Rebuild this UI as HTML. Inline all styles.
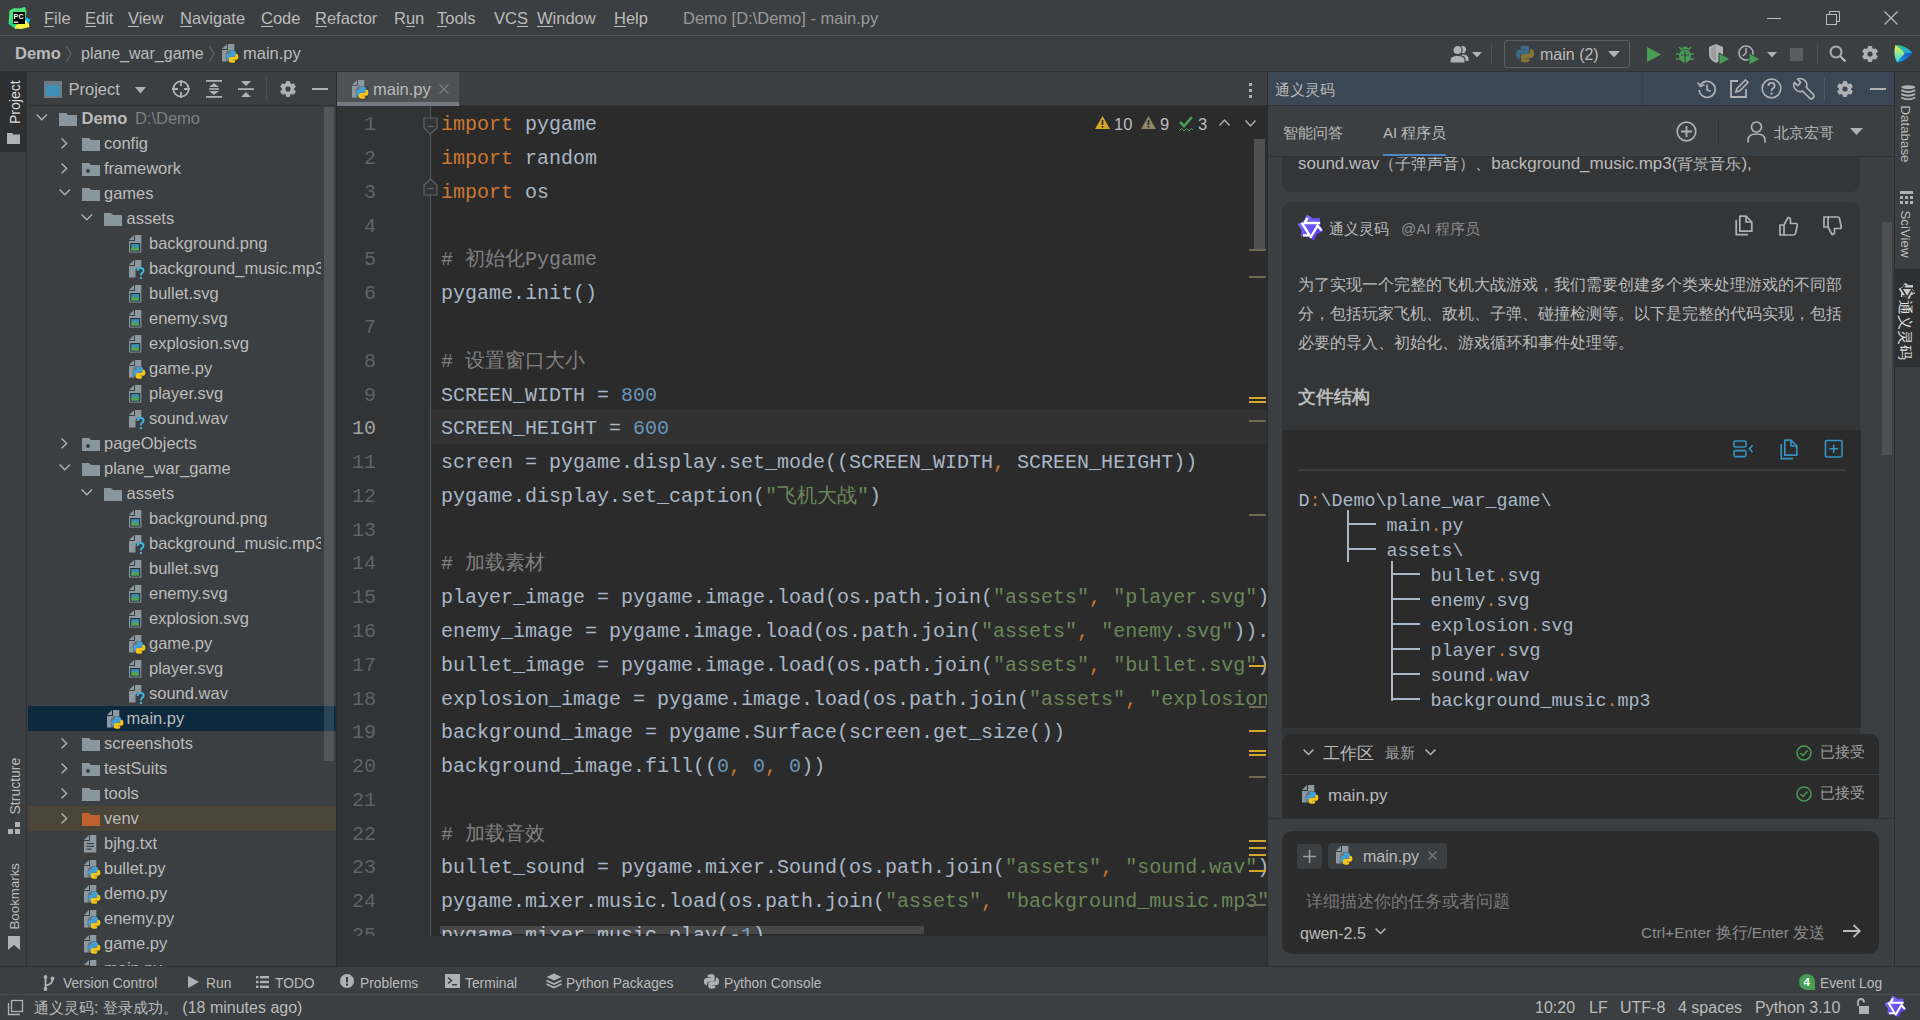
<!DOCTYPE html>
<html><head><meta charset="utf-8">
<style>
*{box-sizing:border-box;margin:0;padding:0}
html,body{width:1920px;height:1020px;overflow:hidden;background:#3c3f41;font-family:"Liberation Sans",sans-serif;color:#bbbbbb;font-size:16px}
.a{position:absolute}
.t{position:absolute;white-space:nowrap}
svg{position:absolute;overflow:visible}
</style></head><body>
<svg width="0" height="0" style="left:0;top:0">
<defs>
<g id="pylogo">
 <path d="M5.9 0C3 0 3.2 1.3 3.2 1.3V2.6H6V3H2.1S0 2.8 0 6C0 9.1 1.8 9 1.8 9H3V7.5S2.9 5.7 4.8 5.7H7.8S9.5 5.7 9.5 4V1.6S9.8 0 5.9 0Z" fill="#40a0d8"/>
 <path d="M6.1 12C9 12 8.8 10.7 8.8 10.7V9.4H6V9H9.9S12 9.2 12 6C12 2.9 10.2 3 10.2 3H9V4.5S9.1 6.3 7.2 6.3H4.2S2.5 6.3 2.5 8V10.4S2.2 12 6.1 12Z" fill="#f5c518"/>
</g>
<g id="pyfile">
 <path d="M0 5 L5 0 V5 Z" fill="#8d99a1"/>
 <path d="M6 0 H12.3 V17.6 H0 V6 H6 Z" fill="#8d99a1"/>
 <rect x="3.6" y="6" width="13.6" height="13.6" rx="5" fill="#2b2b2b" opacity=".35"/>
 <use href="#pylogo" x="4.4" y="6.8"/>
</g>
<g id="imgfile">
 <path d="M0 5 L5 0 V5 Z" fill="#8d99a1"/>
 <path d="M6 0 H12.3 V17.6 H0 V6 H6 Z" fill="#8d99a1"/>
 <rect x="1.2" y="8" width="10" height="8.6" fill="#263034"/>
 <rect x="2.3" y="9.1" width="7.8" height="6.4" fill="#3a8db3"/>
 <path d="M2.3 15.5 V13 Q4.5 11 6.8 12.6 Q9 12.6 10.1 14.2 V15.5 Z" fill="#55a648"/>
</g>
<g id="unkfile">
 <path d="M0 5 L5 0 V5 Z" fill="#8d99a1"/>
 <path d="M6 0 H12.3 V7 Q8 7 6.5 10 V17.6 H0 V6 H6 Z" fill="#8d99a1"/>
 <path d="M8.6 11 Q8.6 8 11.6 8 Q14.6 8 14.6 10.6 Q14.6 12.2 12.8 13.2 Q11.9 13.8 11.9 15.6" fill="none" stroke="#40b6e0" stroke-width="1.9"/>
 <rect x="10.9" y="17" width="2" height="2" fill="#40b6e0"/>
</g>
<g id="txtfile">
 <path d="M0 5 L5 0 V5 Z" fill="#8d99a1"/>
 <path d="M6 0 H12.3 V17.6 H0 V6 H6 Z" fill="#8d99a1"/>
 <rect x="2.5" y="8" width="7.5" height="1.2" fill="#3c3f41"/>
 <rect x="2.5" y="10.8" width="7.5" height="1.2" fill="#3c3f41"/>
 <rect x="2.5" y="13.6" width="5" height="1.2" fill="#3c3f41"/>
</g>
<g id="folder">
 <path d="M0 2 H7 L9 4 H18 V15 H0 Z" fill="#8a969d"/>
</g>
<g id="folderdot">
 <path d="M0 2 H7 L9 4 H18 V15 H0 Z" fill="#8a969d"/>
 <circle cx="6" cy="10" r="2" fill="#3c3f41"/>
</g>
<g id="folderorange">
 <path d="M0 2 H7 L9 4 H18 V15 H0 Z" fill="#c0602f"/>
</g>
<g id="chevR"><path d="M1 1 L6 6 L1 11" fill="none" stroke="#afb1b3" stroke-width="1.3"/></g>
<g id="chevD"><path d="M1 1 L6.5 6.5 L12 1" fill="none" stroke="#afb1b3" stroke-width="1.3"/></g>
</defs></svg>

<div class="a" style="left:0px;top:0px;width:1920px;height:35px;background:#3c3f41;"></div>
<div class="a" style="left:0px;top:35px;width:1920px;height:1px;background:#515658;"></div>
<svg style="left:8px;top:7px;" width="22" height="22" viewBox="0 0 22 22"><path d="M1.5 3.5 L6 1.2 L11 1.5 L17 0 L18.5 5 L17 18 L7.5 22 L0.5 17 Z" fill="#21d789"/><path d="M1.5 3.5 L6 1.2 L11 1.5 L17 0 L18.5 5 L9 6 L4 14 L0.8 16Z" fill="#6fe36a" opacity=".6"/><path d="M7.5 18.5 L20 12 L21.5 20 L13 22 L7 21.5Z" fill="#f5f53f"/><path d="M16.5 9.5 L22.5 12.5 L20 17Z" fill="#07c3f2"/><rect x="5" y="5" width="12" height="12" fill="#000"/><text x="5.6" y="11.6" font-size="7.2" font-weight="bold" fill="#fff" font-family="Liberation Sans">PC</text><rect x="5.8" y="14.5" width="4.5" height="1.3" fill="#fff"/></svg>
<div class="t " style="left:44px;top:8.28px;font-size:16.5px;line-height:21px;color:#bbbbbb;">File</div>
<div class="t " style="left:85px;top:8.28px;font-size:16.5px;line-height:21px;color:#bbbbbb;">Edit</div>
<div class="t " style="left:128px;top:8.28px;font-size:16.5px;line-height:21px;color:#bbbbbb;">View</div>
<div class="t " style="left:180px;top:8.28px;font-size:16.5px;line-height:21px;color:#bbbbbb;">Navigate</div>
<div class="t " style="left:261px;top:8.28px;font-size:16.5px;line-height:21px;color:#bbbbbb;">Code</div>
<div class="t " style="left:315px;top:8.28px;font-size:16.5px;line-height:21px;color:#bbbbbb;">Refactor</div>
<div class="t " style="left:394px;top:8.28px;font-size:16.5px;line-height:21px;color:#bbbbbb;">Run</div>
<div class="t " style="left:437px;top:8.28px;font-size:16.5px;line-height:21px;color:#bbbbbb;">Tools</div>
<div class="t " style="left:494px;top:8.28px;font-size:16.5px;line-height:21px;color:#bbbbbb;">VCS</div>
<div class="t " style="left:537px;top:8.28px;font-size:16.5px;line-height:21px;color:#bbbbbb;">Window</div>
<div class="t " style="left:614px;top:8.28px;font-size:16.5px;line-height:21px;color:#bbbbbb;">Help</div>
<div class="a" style="left:44px;top:26px;width:10px;height:1px;background:#bbbbbb;"></div>
<div class="a" style="left:85px;top:26px;width:11px;height:1px;background:#bbbbbb;"></div>
<div class="a" style="left:128px;top:26px;width:11px;height:1px;background:#bbbbbb;"></div>
<div class="a" style="left:180px;top:26px;width:12px;height:1px;background:#bbbbbb;"></div>
<div class="a" style="left:261px;top:26px;width:12px;height:1px;background:#bbbbbb;"></div>
<div class="a" style="left:315px;top:26px;width:12px;height:1px;background:#bbbbbb;"></div>
<div class="a" style="left:406px;top:26px;width:9px;height:1px;background:#bbbbbb;"></div>
<div class="a" style="left:437px;top:26px;width:10px;height:1px;background:#bbbbbb;"></div>
<div class="a" style="left:517px;top:26px;width:11px;height:1px;background:#bbbbbb;"></div>
<div class="a" style="left:537px;top:26px;width:16px;height:1px;background:#bbbbbb;"></div>
<div class="a" style="left:614px;top:26px;width:12px;height:1px;background:#bbbbbb;"></div>
<div class="t " style="left:683px;top:8.28px;font-size:16.5px;line-height:21px;color:#9a9a9a;">Demo [D:\Demo] - main.py</div>
<div class="a" style="left:1767px;top:18px;width:14px;height:1px;background:#bbbbbb;"></div>
<svg style="left:1826px;top:11px;" width="14" height="14" viewBox="0 0 14 14"><rect x="0.5" y="3.5" width="10" height="10" fill="none" stroke="#bbb"/><path d="M3.5 3.5 V0.5 H13.5 V10.5 H10.5" fill="none" stroke="#bbb"/></svg>
<svg style="left:1884px;top:11px;" width="14" height="14" viewBox="0 0 14 14"><path d="M0.5 0.5 L13.5 13.5 M13.5 0.5 L0.5 13.5" stroke="#bbb" stroke-width="1.2"/></svg>
<div class="a" style="left:0px;top:36px;width:1920px;height:35px;background:#3c3f41;"></div>
<div class="a" style="left:0px;top:71px;width:1920px;height:1px;background:#323232;"></div>
<div class="t " style="left:15px;top:43.28px;font-size:16.5px;line-height:21px;color:#bbbbbb;font-weight:bold;">Demo</div>
<svg style="left:66px;top:46px;" width="6" height="16" viewBox="0 0 6 16"><path d="M0.5 0.5 L5 8 L0.5 15.5" fill="none" stroke="#6e7072" stroke-width="1"/></svg>
<div class="t " style="left:81px;top:43.46px;font-size:16px;line-height:21px;color:#bbbbbb;">plane_war_game</div>
<svg style="left:209px;top:46px;" width="6" height="16" viewBox="0 0 6 16"><path d="M0.5 0.5 L5 8 L0.5 15.5" fill="none" stroke="#6e7072" stroke-width="1"/></svg>
<svg style="left:222px;top:44px;" width="17" height="20" viewBox="0 0 17 20"><use href="#pyfile"/></svg>
<div class="t " style="left:243px;top:43.28px;font-size:16.5px;line-height:21px;color:#bbbbbb;">main.py</div>
<svg style="left:1450px;top:45px;" width="20" height="18" viewBox="0 0 20 18"><circle cx="12.5" cy="4.6" r="3.6" fill="#afb1b3"/><path d="M9 16 Q9 9.5 13 9.5 Q18.5 9.5 18.5 14 V16Z" fill="#afb1b3"/><circle cx="7.5" cy="5" r="4.6" fill="#afb1b3" stroke="#3c3f41" stroke-width="1.2"/><path d="M0 18 V15 Q0 10.5 7.5 10.5 Q15 10.5 15 15 V18Z" fill="#afb1b3" stroke="#3c3f41" stroke-width="1.2"/></svg>
<svg style="left:1472px;top:52px;" width="10" height="6" viewBox="0 0 10 6"><path d="M0 0 H10 L5 5.5 Z" fill="#afb1b3"/></svg>
<div class="a" style="left:1491px;top:43px;width:1px;height:22px;background:#4c5052;"></div>
<div class="a" style="left:1504px;top:40px;width:126px;height:28px;background:transparent;border:1px solid #5e6060;border-radius:3px"></div>
<svg style="left:1516px;top:45px;" width="18" height="18" viewBox="0 0 18 18"><path d="M8.8 0.5c-4.5 0-4.2 2-4.2 2v2h4.3v.6H2.8S0 4.8 0 9.3s2.5 4.4 2.5 4.4H4v-2.1s-.1-2.5 2.5-2.5h4.2s2.4 0 2.4-2.4V2.9S13.5.5 8.8.5z" fill="#3b6987"/><path d="M9.2 17.5c4.5 0 4.2-2 4.2-2v-2H9.1v-.6h6.1s2.8.3 2.8-4.2-2.5-4.4-2.5-4.4H14v2.1s.1 2.5-2.5 2.5H7.3s-2.4 0-2.4 2.4v3.8S4.5 17.5 9.2 17.5z" fill="#857236"/></svg>
<div class="t " style="left:1540px;top:43.96px;font-size:16px;line-height:21px;color:#bbbbbb;">main (2)</div>
<svg style="left:1608px;top:51px;" width="12" height="7" viewBox="0 0 12 7"><path d="M0 0 H12 L6 6.5 Z" fill="#afb1b3"/></svg>
<svg style="left:1647px;top:47px;" width="14" height="15" viewBox="0 0 14 15"><path d="M0 0 L14 7.5 L0 15 Z" fill="#499c54"/></svg>
<svg style="left:1676px;top:45px;" width="18" height="18" viewBox="0 0 18 18"><ellipse cx="9" cy="11" rx="6" ry="6.5" fill="#499c54"/><path d="M5 4 Q9 -1 13 4 Z" fill="#499c54"/><path d="M3 2 L6 5 M15 2 L12 5 M0 9 H4 M14 9 H18 M0 14 H4 M14 14 H18" stroke="#499c54" stroke-width="1.6"/><path d="M9 6 V17 M5 10 H13" stroke="#3c3f41" stroke-width="1.1"/></svg>
<svg style="left:1708px;top:44px;" width="24" height="22" viewBox="0 0 24 22"><path d="M1 3 L8 0 L15 3 V10 Q15 16 8 19 Q1 16 1 10 Z" fill="#afb1b3"/><path d="M8 2 V17 Q3 15 3 10 V4 Z" fill="#9a9c9e"/><path d="M11 9 L22 15 L11 21 Z" fill="#499c54" stroke="#3c3f41" stroke-width="1"/></svg>
<svg style="left:1738px;top:44px;" width="26" height="22" viewBox="0 0 26 22"><circle cx="8" cy="9" r="7" fill="none" stroke="#afb1b3" stroke-width="1.6"/><path d="M8 4 V9 L5 12" fill="none" stroke="#afb1b3" stroke-width="1.5"/><path d="M11 9 L22 15 L11 21 Z" fill="#499c54" stroke="#3c3f41" stroke-width="1"/></svg>
<svg style="left:1767px;top:52px;" width="10" height="6" viewBox="0 0 10 6"><path d="M0 0 H10 L5 5.5 Z" fill="#afb1b3"/></svg>
<div class="a" style="left:1790px;top:48px;width:13px;height:13px;background:#5a5d5f;"></div>
<div class="a" style="left:1817px;top:43px;width:1px;height:22px;background:#4c5052;"></div>
<svg style="left:1829px;top:45px;" width="18" height="18" viewBox="0 0 18 18"><circle cx="7" cy="7" r="5.5" fill="none" stroke="#afb1b3" stroke-width="2"/><path d="M11 11 L16.5 16.5" stroke="#afb1b3" stroke-width="2.4"/></svg>
<svg style="left:1862px;top:46px;" width="17" height="17" viewBox="0 0 17 17"><g transform="translate(8 8)"><circle r="6.2" fill="#afb1b3"/><rect x="-2.2" y="-8" width="4.4" height="16" rx="1" fill="#afb1b3" transform="rotate(0)"/><rect x="-2.2" y="-8" width="4.4" height="16" rx="1" fill="#afb1b3" transform="rotate(60)"/><rect x="-2.2" y="-8" width="4.4" height="16" rx="1" fill="#afb1b3" transform="rotate(120)"/><circle r="2.6" fill="#3c3f41"/></g></svg>
<svg style="left:1894px;top:44px;" width="20" height="20" viewBox="0 0 20 20"><defs><linearGradient id="tbl" x1="0" y1="0" x2="0" y2="1"><stop offset="0" stop-color="#f2f250"/><stop offset="1" stop-color="#28d4e0"/></linearGradient><linearGradient id="tbt" x1="0" y1="0" x2="1" y2="1"><stop offset="0" stop-color="#22d882"/><stop offset="1" stop-color="#1e9af0"/></linearGradient><linearGradient id="tbb" x1="1" y1="0" x2="0" y2="1"><stop offset="0" stop-color="#1c4fc0"/><stop offset="1" stop-color="#10a8f0"/></linearGradient></defs><path d="M1.5 1 Q-1.5 10 3 18.5 L11 9.2 Q7 4 1.5 1Z" fill="url(#tbl)"/><path d="M1.5 1 Q12 1 18.5 9.2 H11 Q7 4 1.5 1Z" fill="url(#tbt)"/><path d="M18.5 9.2 Q12 17 3 18.5 Q8 13 11 9.2Z" fill="url(#tbb)"/></svg>
<div class="a" style="left:0px;top:72px;width:28px;height:895px;background:#3c3f41;"></div>
<div class="a" style="left:26px;top:72px;width:1px;height:895px;background:#2f3133;"></div>
<div class="a" style="left:0px;top:72px;width:26px;height:80px;background:#2d2f31;"></div>
<div class="t " style="left:0px;top:-13.85px;font-size:14px;line-height:18px;color:#dddddd;transform-origin:0 0;transform:translate(6.2px,124px) rotate(-90deg);top:0;line-height:18px">Project</div>
<svg style="left:7px;top:133px;" width="13" height="11" viewBox="0 0 13 11"><path d="M0 0 H5 L6.5 1.5 H13 V11 H0Z" fill="#afb1b3"/></svg>
<div class="t " style="left:0px;top:-13.85px;font-size:14px;line-height:18px;color:#bbbbbb;transform-origin:0 0;transform:translate(6.2px,814.5px) rotate(-90deg);top:0;line-height:18px">Structure</div>
<svg style="left:8px;top:822px;" width="13" height="12" viewBox="0 0 13 12"><rect x="7" y="0" width="5" height="5" fill="#afb1b3"/><rect x="0" y="7" width="5" height="5" fill="#afb1b3"/><rect x="7" y="7" width="5" height="5" fill="#afb1b3"/></svg>
<div class="t " style="left:0px;top:-13.11px;font-size:13.3px;line-height:17px;color:#bbbbbb;transform-origin:0 0;transform:translate(6.4px,929.5px) rotate(-90deg);top:0;line-height:18px">Bookmarks</div>
<svg style="left:8px;top:936px;" width="12" height="14" viewBox="0 0 12 14"><path d="M0 0 H12 V14 L6 9 L0 14Z" fill="#afb1b3"/></svg>
<div class="a" style="left:28px;top:72px;width:308px;height:895px;background:#3c3f41;"></div>
<div class="a" style="left:28px;top:105px;width:308px;height:1px;background:#323232;"></div>
<svg style="left:44px;top:81px;" width="18" height="17" viewBox="0 0 18 17"><rect x="0" y="0" width="18" height="17" fill="#6f7b82"/><rect x="2" y="4" width="14" height="11" fill="#3e90b8"/></svg>
<div class="t " style="left:68.5px;top:78.78px;font-size:16.5px;line-height:21px;color:#bbbbbb;">Project</div>
<svg style="left:135px;top:87px;" width="11" height="7" viewBox="0 0 11 7"><path d="M0 0 H11 L5.5 6.5Z" fill="#afb1b3"/></svg>
<svg style="left:172px;top:80px;" width="18" height="18" viewBox="0 0 18 18"><circle cx="9" cy="9" r="7.6" fill="none" stroke="#afb1b3" stroke-width="1.8"/><path d="M9 0 V6 M9 12 V18 M0 9 H6 M12 9 H18" stroke="#afb1b3" stroke-width="1.8"/></svg>
<svg style="left:206px;top:80px;" width="16" height="18" viewBox="0 0 16 18"><rect x="0" y="0" width="16" height="1.8" fill="#afb1b3"/><rect x="0" y="16" width="16" height="1.8" fill="#afb1b3"/><path d="M3 7 L8 3 L13 7Z M3 11 L8 15 L13 11Z" fill="#afb1b3"/><rect x="3" y="8.2" width="10" height="1.6" fill="#afb1b3"/></svg>
<svg style="left:238px;top:80px;" width="16" height="18" viewBox="0 0 16 18"><rect x="0" y="8.2" width="16" height="1.8" fill="#afb1b3"/><path d="M3 1 L8 6 L13 1Z M3 17 L8 12 L13 17Z" fill="#afb1b3"/></svg>
<div class="a" style="left:266px;top:77px;width:1px;height:23px;background:#4c5052;"></div>
<svg style="left:280px;top:81px;" width="17" height="17" viewBox="0 0 17 17"><g transform="translate(8 8)"><circle r="6.2" fill="#afb1b3"/><rect x="-2.2" y="-8" width="4.4" height="16" rx="1" fill="#afb1b3" transform="rotate(0)"/><rect x="-2.2" y="-8" width="4.4" height="16" rx="1" fill="#afb1b3" transform="rotate(60)"/><rect x="-2.2" y="-8" width="4.4" height="16" rx="1" fill="#afb1b3" transform="rotate(120)"/><circle r="2.6" fill="#3c3f41"/></g></svg>
<div class="a" style="left:312px;top:88px;width:16px;height:2px;background:#afb1b3;"></div>
<div class="a" style="left:28px;top:706px;width:308px;height:25px;background:#0d293e;"></div>
<div class="a" style="left:28px;top:806px;width:308px;height:25px;background:#4a4538;"></div>
<div class="a" style="left:28px;top:106px;width:293px;height:861px;overflow:hidden">
<svg style="left:8.0px;top:8px;" width="12" height="8" viewBox="0 0 12 8"><path d="M0.6 0.6 L5.8 5.8 L11 0.6" fill="none" stroke="#afb1b3" stroke-width="1.4"/></svg>
<svg style="left:31.0px;top:5px;" width="18" height="15" viewBox="0 0 18 15"><use href="#folder"/></svg>
<div class="t" style="left:53.5px;top:2.200000000000001px;font-size:16.5px;line-height:21px;color:#bbbbbb"><b>Demo</b> <span style="color:#7e7e7e;margin-left:3px">D:\Demo</span></div>
<svg style="left:33.0px;top:32px;" width="8" height="11" viewBox="0 0 8 11"><path d="M0.6 0.6 L5.6 5.4 L0.6 10.2" fill="none" stroke="#afb1b3" stroke-width="1.4"/></svg>
<svg style="left:53.5px;top:30px;" width="18" height="15" viewBox="0 0 18 15"><use href="#folder"/></svg>
<div class="t " style="left:76.0px;top:27.28px;font-size:16.5px;line-height:21px;color:#bbbbbb;">config</div>
<svg style="left:33.0px;top:57px;" width="8" height="11" viewBox="0 0 8 11"><path d="M0.6 0.6 L5.6 5.4 L0.6 10.2" fill="none" stroke="#afb1b3" stroke-width="1.4"/></svg>
<svg style="left:53.5px;top:55px;" width="18" height="15" viewBox="0 0 18 15"><use href="#folderdot"/></svg>
<div class="t " style="left:76.0px;top:52.28px;font-size:16.5px;line-height:21px;color:#bbbbbb;">framework</div>
<svg style="left:30.5px;top:83px;" width="12" height="8" viewBox="0 0 12 8"><path d="M0.6 0.6 L5.8 5.8 L11 0.6" fill="none" stroke="#afb1b3" stroke-width="1.4"/></svg>
<svg style="left:53.5px;top:80px;" width="18" height="15" viewBox="0 0 18 15"><use href="#folder"/></svg>
<div class="t " style="left:76.0px;top:77.28px;font-size:16.5px;line-height:21px;color:#bbbbbb;">games</div>
<svg style="left:53.0px;top:108px;" width="12" height="8" viewBox="0 0 12 8"><path d="M0.6 0.6 L5.8 5.8 L11 0.6" fill="none" stroke="#afb1b3" stroke-width="1.4"/></svg>
<svg style="left:76.0px;top:105px;" width="18" height="15" viewBox="0 0 18 15"><use href="#folder"/></svg>
<div class="t " style="left:98.5px;top:102.28px;font-size:16.5px;line-height:21px;color:#bbbbbb;">assets</div>
<svg style="left:101.0px;top:129.2px;" width="17" height="20" viewBox="0 0 17 20"><use href="#imgfile"/></svg>
<div class="t " style="left:121.0px;top:127.28px;font-size:16.5px;line-height:21px;color:#bbbbbb;">background.png</div>
<svg style="left:101.0px;top:154.2px;" width="17" height="20" viewBox="0 0 17 20"><use href="#unkfile"/></svg>
<div class="t " style="left:121.0px;top:152.28px;font-size:16.5px;line-height:21px;color:#bbbbbb;">background_music.mp3</div>
<svg style="left:101.0px;top:179.2px;" width="17" height="20" viewBox="0 0 17 20"><use href="#imgfile"/></svg>
<div class="t " style="left:121.0px;top:177.28px;font-size:16.5px;line-height:21px;color:#bbbbbb;">bullet.svg</div>
<svg style="left:101.0px;top:204.2px;" width="17" height="20" viewBox="0 0 17 20"><use href="#imgfile"/></svg>
<div class="t " style="left:121.0px;top:202.28px;font-size:16.5px;line-height:21px;color:#bbbbbb;">enemy.svg</div>
<svg style="left:101.0px;top:229.2px;" width="17" height="20" viewBox="0 0 17 20"><use href="#imgfile"/></svg>
<div class="t " style="left:121.0px;top:227.28px;font-size:16.5px;line-height:21px;color:#bbbbbb;">explosion.svg</div>
<svg style="left:101.0px;top:254.2px;" width="17" height="20" viewBox="0 0 17 20"><use href="#pyfile"/></svg>
<div class="t " style="left:121.0px;top:252.28px;font-size:16.5px;line-height:21px;color:#bbbbbb;">game.py</div>
<svg style="left:101.0px;top:279.2px;" width="17" height="20" viewBox="0 0 17 20"><use href="#imgfile"/></svg>
<div class="t " style="left:121.0px;top:277.28px;font-size:16.5px;line-height:21px;color:#bbbbbb;">player.svg</div>
<svg style="left:101.0px;top:304.2px;" width="17" height="20" viewBox="0 0 17 20"><use href="#unkfile"/></svg>
<div class="t " style="left:121.0px;top:302.28px;font-size:16.5px;line-height:21px;color:#bbbbbb;">sound.wav</div>
<svg style="left:33.0px;top:332px;" width="8" height="11" viewBox="0 0 8 11"><path d="M0.6 0.6 L5.6 5.4 L0.6 10.2" fill="none" stroke="#afb1b3" stroke-width="1.4"/></svg>
<svg style="left:53.5px;top:330px;" width="18" height="15" viewBox="0 0 18 15"><use href="#folderdot"/></svg>
<div class="t " style="left:76.0px;top:327.28px;font-size:16.5px;line-height:21px;color:#bbbbbb;">pageObjects</div>
<svg style="left:30.5px;top:358px;" width="12" height="8" viewBox="0 0 12 8"><path d="M0.6 0.6 L5.8 5.8 L11 0.6" fill="none" stroke="#afb1b3" stroke-width="1.4"/></svg>
<svg style="left:53.5px;top:355px;" width="18" height="15" viewBox="0 0 18 15"><use href="#folder"/></svg>
<div class="t " style="left:76.0px;top:352.28px;font-size:16.5px;line-height:21px;color:#bbbbbb;">plane_war_game</div>
<svg style="left:53.0px;top:383px;" width="12" height="8" viewBox="0 0 12 8"><path d="M0.6 0.6 L5.8 5.8 L11 0.6" fill="none" stroke="#afb1b3" stroke-width="1.4"/></svg>
<svg style="left:76.0px;top:380px;" width="18" height="15" viewBox="0 0 18 15"><use href="#folder"/></svg>
<div class="t " style="left:98.5px;top:377.28px;font-size:16.5px;line-height:21px;color:#bbbbbb;">assets</div>
<svg style="left:101.0px;top:404.2px;" width="17" height="20" viewBox="0 0 17 20"><use href="#imgfile"/></svg>
<div class="t " style="left:121.0px;top:402.28px;font-size:16.5px;line-height:21px;color:#bbbbbb;">background.png</div>
<svg style="left:101.0px;top:429.2px;" width="17" height="20" viewBox="0 0 17 20"><use href="#unkfile"/></svg>
<div class="t " style="left:121.0px;top:427.28px;font-size:16.5px;line-height:21px;color:#bbbbbb;">background_music.mp3</div>
<svg style="left:101.0px;top:454.2px;" width="17" height="20" viewBox="0 0 17 20"><use href="#imgfile"/></svg>
<div class="t " style="left:121.0px;top:452.28px;font-size:16.5px;line-height:21px;color:#bbbbbb;">bullet.svg</div>
<svg style="left:101.0px;top:479.2px;" width="17" height="20" viewBox="0 0 17 20"><use href="#imgfile"/></svg>
<div class="t " style="left:121.0px;top:477.28px;font-size:16.5px;line-height:21px;color:#bbbbbb;">enemy.svg</div>
<svg style="left:101.0px;top:504.2px;" width="17" height="20" viewBox="0 0 17 20"><use href="#imgfile"/></svg>
<div class="t " style="left:121.0px;top:502.28px;font-size:16.5px;line-height:21px;color:#bbbbbb;">explosion.svg</div>
<svg style="left:101.0px;top:529.2px;" width="17" height="20" viewBox="0 0 17 20"><use href="#pyfile"/></svg>
<div class="t " style="left:121.0px;top:527.28px;font-size:16.5px;line-height:21px;color:#bbbbbb;">game.py</div>
<svg style="left:101.0px;top:554.2px;" width="17" height="20" viewBox="0 0 17 20"><use href="#imgfile"/></svg>
<div class="t " style="left:121.0px;top:552.28px;font-size:16.5px;line-height:21px;color:#bbbbbb;">player.svg</div>
<svg style="left:101.0px;top:579.2px;" width="17" height="20" viewBox="0 0 17 20"><use href="#unkfile"/></svg>
<div class="t " style="left:121.0px;top:577.28px;font-size:16.5px;line-height:21px;color:#bbbbbb;">sound.wav</div>
<svg style="left:78.5px;top:604.2px;" width="17" height="20" viewBox="0 0 17 20"><use href="#pyfile"/></svg>
<div class="t " style="left:98.5px;top:602.28px;font-size:16.5px;line-height:21px;color:#bbbbbb;">main.py</div>
<svg style="left:33.0px;top:632px;" width="8" height="11" viewBox="0 0 8 11"><path d="M0.6 0.6 L5.6 5.4 L0.6 10.2" fill="none" stroke="#afb1b3" stroke-width="1.4"/></svg>
<svg style="left:53.5px;top:630px;" width="18" height="15" viewBox="0 0 18 15"><use href="#folder"/></svg>
<div class="t " style="left:76.0px;top:627.28px;font-size:16.5px;line-height:21px;color:#bbbbbb;">screenshots</div>
<svg style="left:33.0px;top:657px;" width="8" height="11" viewBox="0 0 8 11"><path d="M0.6 0.6 L5.6 5.4 L0.6 10.2" fill="none" stroke="#afb1b3" stroke-width="1.4"/></svg>
<svg style="left:53.5px;top:655px;" width="18" height="15" viewBox="0 0 18 15"><use href="#folderdot"/></svg>
<div class="t " style="left:76.0px;top:652.28px;font-size:16.5px;line-height:21px;color:#bbbbbb;">testSuits</div>
<svg style="left:33.0px;top:682px;" width="8" height="11" viewBox="0 0 8 11"><path d="M0.6 0.6 L5.6 5.4 L0.6 10.2" fill="none" stroke="#afb1b3" stroke-width="1.4"/></svg>
<svg style="left:53.5px;top:680px;" width="18" height="15" viewBox="0 0 18 15"><use href="#folder"/></svg>
<div class="t " style="left:76.0px;top:677.28px;font-size:16.5px;line-height:21px;color:#bbbbbb;">tools</div>
<svg style="left:33.0px;top:707px;" width="8" height="11" viewBox="0 0 8 11"><path d="M0.6 0.6 L5.6 5.4 L0.6 10.2" fill="none" stroke="#afb1b3" stroke-width="1.4"/></svg>
<svg style="left:53.5px;top:705px;" width="18" height="15" viewBox="0 0 18 15"><use href="#folderorange"/></svg>
<div class="t " style="left:76.0px;top:702.28px;font-size:16.5px;line-height:21px;color:#bbbbbb;">venv</div>
<svg style="left:56.0px;top:729.2px;" width="17" height="20" viewBox="0 0 17 20"><use href="#txtfile"/></svg>
<div class="t " style="left:76.0px;top:727.28px;font-size:16.5px;line-height:21px;color:#bbbbbb;">bjhg.txt</div>
<svg style="left:56.0px;top:754.2px;" width="17" height="20" viewBox="0 0 17 20"><use href="#pyfile"/></svg>
<div class="t " style="left:76.0px;top:752.28px;font-size:16.5px;line-height:21px;color:#bbbbbb;">bullet.py</div>
<svg style="left:56.0px;top:779.2px;" width="17" height="20" viewBox="0 0 17 20"><use href="#pyfile"/></svg>
<div class="t " style="left:76.0px;top:777.28px;font-size:16.5px;line-height:21px;color:#bbbbbb;">demo.py</div>
<svg style="left:56.0px;top:804.2px;" width="17" height="20" viewBox="0 0 17 20"><use href="#pyfile"/></svg>
<div class="t " style="left:76.0px;top:802.28px;font-size:16.5px;line-height:21px;color:#bbbbbb;">enemy.py</div>
<svg style="left:56.0px;top:829.2px;" width="17" height="20" viewBox="0 0 17 20"><use href="#pyfile"/></svg>
<div class="t " style="left:76.0px;top:827.28px;font-size:16.5px;line-height:21px;color:#bbbbbb;">game.py</div>
<svg style="left:56.0px;top:854.2px;" width="17" height="20" viewBox="0 0 17 20"><use href="#pyfile"/></svg>
<div class="t " style="left:76.0px;top:852.28px;font-size:16.5px;line-height:21px;color:#bbbbbb;">main.py</div>
</div>
<div class="a" style="left:324px;top:107px;width:10px;height:654px;background:rgba(255,255,255,0.12);"></div>
<div class="a" style="left:336px;top:72px;width:1px;height:895px;background:#2b2b2b;"></div>
<div class="a" style="left:337px;top:72px;width:931px;height:34px;background:#3c3f41;"></div>
<div class="a" style="left:337px;top:105px;width:931px;height:1px;background:#323232;"></div>
<div class="a" style="left:337px;top:72px;width:122px;height:34px;background:#4e5254;"></div>
<div class="a" style="left:337px;top:102px;width:122px;height:4px;background:#747a80;"></div>
<svg style="left:352px;top:80px;" width="17" height="20" viewBox="0 0 17 20"><use href="#pyfile"/></svg>
<div class="t " style="left:373px;top:79.28px;font-size:16.5px;line-height:21px;color:#bbbbbb;">main.py</div>
<svg style="left:439px;top:84px;" width="10" height="10" viewBox="0 0 10 10"><path d="M0.5 0.5 L9.5 9.5 M9.5 0.5 L0.5 9.5" stroke="#7b7e80" stroke-width="1.2"/></svg>
<div class="a" style="left:1249px;top:83px;width:3px;height:3px;background:#afb1b3;"></div>
<div class="a" style="left:1249px;top:89px;width:3px;height:3px;background:#afb1b3;"></div>
<div class="a" style="left:1249px;top:95px;width:3px;height:3px;background:#afb1b3;"></div>
<div class="a" style="left:337px;top:106px;width:931px;height:861px;background:#2b2b2b;"></div>
<div class="a" style="left:337px;top:106px;width:94px;height:830px;background:#313335;"></div>
<div class="a" style="left:431px;top:410px;width:836px;height:34px;background:#323232;"></div>
<div class="a" style="left:336px;top:106px;width:931px;height:830px;overflow:hidden">
<div class="t" style="left:0;width:40px;text-align:right;top:2.28px;font-family:'Liberation Mono',monospace;font-size:20px;line-height:34px;color:#606366">1</div>
<div class="t" style="left:105px;top:2.28px;font-family:'Liberation Mono',monospace;font-size:20px;line-height:34px;color:#a9b7c6"><span style="color:#cc7832">import</span> pygame</div>
<div class="t" style="left:0;width:40px;text-align:right;top:36.06px;font-family:'Liberation Mono',monospace;font-size:20px;line-height:34px;color:#606366">2</div>
<div class="t" style="left:105px;top:36.06px;font-family:'Liberation Mono',monospace;font-size:20px;line-height:34px;color:#a9b7c6"><span style="color:#cc7832">import</span> random</div>
<div class="t" style="left:0;width:40px;text-align:right;top:69.84px;font-family:'Liberation Mono',monospace;font-size:20px;line-height:34px;color:#606366">3</div>
<div class="t" style="left:105px;top:69.84px;font-family:'Liberation Mono',monospace;font-size:20px;line-height:34px;color:#a9b7c6"><span style="color:#cc7832">import</span> os</div>
<div class="t" style="left:0;width:40px;text-align:right;top:103.62px;font-family:'Liberation Mono',monospace;font-size:20px;line-height:34px;color:#606366">4</div>
<div class="t" style="left:0;width:40px;text-align:right;top:137.40px;font-family:'Liberation Mono',monospace;font-size:20px;line-height:34px;color:#606366">5</div>
<div class="t" style="left:105px;top:137.40px;font-family:'Liberation Mono',monospace;font-size:20px;line-height:34px;color:#a9b7c6"><span style="color:#808080"># 初始化Pygame</span></div>
<div class="t" style="left:0;width:40px;text-align:right;top:171.18px;font-family:'Liberation Mono',monospace;font-size:20px;line-height:34px;color:#606366">6</div>
<div class="t" style="left:105px;top:171.18px;font-family:'Liberation Mono',monospace;font-size:20px;line-height:34px;color:#a9b7c6">pygame.init()</div>
<div class="t" style="left:0;width:40px;text-align:right;top:204.96px;font-family:'Liberation Mono',monospace;font-size:20px;line-height:34px;color:#606366">7</div>
<div class="t" style="left:0;width:40px;text-align:right;top:238.74px;font-family:'Liberation Mono',monospace;font-size:20px;line-height:34px;color:#606366">8</div>
<div class="t" style="left:105px;top:238.74px;font-family:'Liberation Mono',monospace;font-size:20px;line-height:34px;color:#a9b7c6"><span style="color:#808080"># 设置窗口大小</span></div>
<div class="t" style="left:0;width:40px;text-align:right;top:272.52px;font-family:'Liberation Mono',monospace;font-size:20px;line-height:34px;color:#606366">9</div>
<div class="t" style="left:105px;top:272.52px;font-family:'Liberation Mono',monospace;font-size:20px;line-height:34px;color:#a9b7c6">SCREEN_WIDTH = <span style="color:#6897bb">800</span></div>
<div class="t" style="left:0;width:40px;text-align:right;top:306.30px;font-family:'Liberation Mono',monospace;font-size:20px;line-height:34px;color:#a4a3a3">10</div>
<div class="t" style="left:105px;top:306.30px;font-family:'Liberation Mono',monospace;font-size:20px;line-height:34px;color:#a9b7c6">SCREEN_HEIGHT = <span style="color:#6897bb">600</span></div>
<div class="t" style="left:0;width:40px;text-align:right;top:340.08px;font-family:'Liberation Mono',monospace;font-size:20px;line-height:34px;color:#606366">11</div>
<div class="t" style="left:105px;top:340.08px;font-family:'Liberation Mono',monospace;font-size:20px;line-height:34px;color:#a9b7c6">screen = pygame.display.set_mode((SCREEN_WIDTH<span style="color:#cc7832">, </span>SCREEN_HEIGHT))</div>
<div class="t" style="left:0;width:40px;text-align:right;top:373.86px;font-family:'Liberation Mono',monospace;font-size:20px;line-height:34px;color:#606366">12</div>
<div class="t" style="left:105px;top:373.86px;font-family:'Liberation Mono',monospace;font-size:20px;line-height:34px;color:#a9b7c6">pygame.display.set_caption(<span style="color:#6a8759">&quot;飞机大战&quot;</span>)</div>
<div class="t" style="left:0;width:40px;text-align:right;top:407.64px;font-family:'Liberation Mono',monospace;font-size:20px;line-height:34px;color:#606366">13</div>
<div class="t" style="left:0;width:40px;text-align:right;top:441.42px;font-family:'Liberation Mono',monospace;font-size:20px;line-height:34px;color:#606366">14</div>
<div class="t" style="left:105px;top:441.42px;font-family:'Liberation Mono',monospace;font-size:20px;line-height:34px;color:#a9b7c6"><span style="color:#808080"># 加载素材</span></div>
<div class="t" style="left:0;width:40px;text-align:right;top:475.20px;font-family:'Liberation Mono',monospace;font-size:20px;line-height:34px;color:#606366">15</div>
<div class="t" style="left:105px;top:475.20px;font-family:'Liberation Mono',monospace;font-size:20px;line-height:34px;color:#a9b7c6">player_image = pygame.image.load(os.path.join(<span style="color:#6a8759">&quot;assets&quot;</span><span style="color:#cc7832">, </span><span style="color:#6a8759">&quot;player.svg&quot;</span>))</div>
<div class="t" style="left:0;width:40px;text-align:right;top:508.98px;font-family:'Liberation Mono',monospace;font-size:20px;line-height:34px;color:#606366">16</div>
<div class="t" style="left:105px;top:508.98px;font-family:'Liberation Mono',monospace;font-size:20px;line-height:34px;color:#a9b7c6">enemy_image = pygame.image.load(os.path.join(<span style="color:#6a8759">&quot;assets&quot;</span><span style="color:#cc7832">, </span><span style="color:#6a8759">&quot;enemy.svg&quot;</span>)).convert_alpha()</div>
<div class="t" style="left:0;width:40px;text-align:right;top:542.76px;font-family:'Liberation Mono',monospace;font-size:20px;line-height:34px;color:#606366">17</div>
<div class="t" style="left:105px;top:542.76px;font-family:'Liberation Mono',monospace;font-size:20px;line-height:34px;color:#a9b7c6">bullet_image = pygame.image.load(os.path.join(<span style="color:#6a8759">&quot;assets&quot;</span><span style="color:#cc7832">, </span><span style="color:#6a8759">&quot;bullet.svg&quot;</span>))</div>
<div class="t" style="left:0;width:40px;text-align:right;top:576.54px;font-family:'Liberation Mono',monospace;font-size:20px;line-height:34px;color:#606366">18</div>
<div class="t" style="left:105px;top:576.54px;font-family:'Liberation Mono',monospace;font-size:20px;line-height:34px;color:#a9b7c6">explosion_image = pygame.image.load(os.path.join(<span style="color:#6a8759">&quot;assets&quot;</span><span style="color:#cc7832">, </span><span style="color:#6a8759">&quot;explosion.svg&quot;</span>))</div>
<div class="t" style="left:0;width:40px;text-align:right;top:610.32px;font-family:'Liberation Mono',monospace;font-size:20px;line-height:34px;color:#606366">19</div>
<div class="t" style="left:105px;top:610.32px;font-family:'Liberation Mono',monospace;font-size:20px;line-height:34px;color:#a9b7c6">background_image = pygame.Surface(screen.get_size())</div>
<div class="t" style="left:0;width:40px;text-align:right;top:644.10px;font-family:'Liberation Mono',monospace;font-size:20px;line-height:34px;color:#606366">20</div>
<div class="t" style="left:105px;top:644.10px;font-family:'Liberation Mono',monospace;font-size:20px;line-height:34px;color:#a9b7c6">background_image.fill((<span style="color:#6897bb">0</span><span style="color:#cc7832">, </span><span style="color:#6897bb">0</span><span style="color:#cc7832">, </span><span style="color:#6897bb">0</span>))</div>
<div class="t" style="left:0;width:40px;text-align:right;top:677.88px;font-family:'Liberation Mono',monospace;font-size:20px;line-height:34px;color:#606366">21</div>
<div class="t" style="left:0;width:40px;text-align:right;top:711.66px;font-family:'Liberation Mono',monospace;font-size:20px;line-height:34px;color:#606366">22</div>
<div class="t" style="left:105px;top:711.66px;font-family:'Liberation Mono',monospace;font-size:20px;line-height:34px;color:#a9b7c6"><span style="color:#808080"># 加载音效</span></div>
<div class="t" style="left:0;width:40px;text-align:right;top:745.44px;font-family:'Liberation Mono',monospace;font-size:20px;line-height:34px;color:#606366">23</div>
<div class="t" style="left:105px;top:745.44px;font-family:'Liberation Mono',monospace;font-size:20px;line-height:34px;color:#a9b7c6">bullet_sound = pygame.mixer.Sound(os.path.join(<span style="color:#6a8759">&quot;assets&quot;</span><span style="color:#cc7832">, </span><span style="color:#6a8759">&quot;sound.wav&quot;</span>))</div>
<div class="t" style="left:0;width:40px;text-align:right;top:779.22px;font-family:'Liberation Mono',monospace;font-size:20px;line-height:34px;color:#606366">24</div>
<div class="t" style="left:105px;top:779.22px;font-family:'Liberation Mono',monospace;font-size:20px;line-height:34px;color:#a9b7c6">pygame.mixer.music.load(os.path.join(<span style="color:#6a8759">&quot;assets&quot;</span><span style="color:#cc7832">, </span><span style="color:#6a8759">&quot;background_music.mp3&quot;</span>))</div>
<div class="t" style="left:0;width:40px;text-align:right;top:813.00px;font-family:'Liberation Mono',monospace;font-size:20px;line-height:34px;color:#606366">25</div>
<div class="t" style="left:105px;top:813.00px;font-family:'Liberation Mono',monospace;font-size:20px;line-height:34px;color:#a9b7c6">pygame.mixer.music.play(-<span style="color:#6897bb">1</span>)</div>
<div class="a" style="left:94px;top:0;width:1px;height:830px;background:#555555"></div>
<svg style="left:87px;top:11.0px" width="16" height="19" viewBox="0 0 16 19"><path d="M1 1 H14 V11 L7.5 17 L1 11 Z" fill="#313335" stroke="#606366" stroke-width="1.2"/><path d="M4.5 9.5 H10.5" stroke="#606366" stroke-width="1.2"/></svg>
<svg style="left:87px;top:71.6px" width="16" height="19" viewBox="0 0 16 19"><path d="M1 17 H14 V7 L7.5 1 L1 7 Z" fill="#313335" stroke="#606366" stroke-width="1.2"/><path d="M4.5 10.5 H10.5" stroke="#606366" stroke-width="1.2"/></svg>
</div>
<div class="a" style="left:337px;top:936px;width:931px;height:31px;background:#313335;"></div>
<div class="a" style="left:440px;top:926px;width:484px;height:8px;background:rgba(255,255,255,0.14);"></div>
<div class="a" style="left:1254px;top:139px;width:11px;height:112px;background:#4e5052;"></div>
<div class="a" style="left:1249px;top:249px;width:17px;height:2px;background:#6f6a55;"></div>
<div class="a" style="left:1249px;top:276px;width:17px;height:2px;background:#6f6a55;"></div>
<div class="a" style="left:1249px;top:397px;width:17px;height:2px;background:#d4a72c;"></div>
<div class="a" style="left:1249px;top:401px;width:17px;height:2px;background:#d4a72c;"></div>
<div class="a" style="left:1249px;top:420px;width:17px;height:2px;background:#6f6a55;"></div>
<div class="a" style="left:1249px;top:514px;width:17px;height:2px;background:#6f6a55;"></div>
<div class="a" style="left:1249px;top:665px;width:17px;height:2px;background:#d4a72c;"></div>
<div class="a" style="left:1249px;top:706px;width:17px;height:2px;background:#6f6a55;"></div>
<div class="a" style="left:1249px;top:730px;width:17px;height:2px;background:#d4a72c;"></div>
<div class="a" style="left:1249px;top:750px;width:17px;height:2px;background:#d4a72c;"></div>
<div class="a" style="left:1249px;top:754px;width:17px;height:2px;background:#d4a72c;"></div>
<div class="a" style="left:1249px;top:776px;width:17px;height:2px;background:#6f6a55;"></div>
<div class="a" style="left:1249px;top:840px;width:17px;height:2px;background:#d4a72c;"></div>
<div class="a" style="left:1249px;top:847px;width:17px;height:2px;background:#d4a72c;"></div>
<div class="a" style="left:1249px;top:854px;width:17px;height:2px;background:#d4a72c;"></div>
<div class="a" style="left:1249px;top:870px;width:17px;height:2px;background:#d4a72c;"></div>
<div class="a" style="left:1249px;top:904px;width:17px;height:2px;background:#6f6a55;"></div>
<svg style="left:1095px;top:116px;" width="15" height="13" viewBox="0 0 15 13"><path d="M7.5 0 L15 13 H0 Z" fill="#d4a72c"/><rect x="6.7" y="4" width="1.6" height="5" fill="#2b2b2b"/><rect x="6.7" y="10" width="1.6" height="1.6" fill="#2b2b2b"/></svg>
<div class="t " style="left:1114px;top:113.78px;font-size:16.5px;line-height:21px;color:#bbbbbb;">10</div>
<svg style="left:1141px;top:116px;" width="15" height="13" viewBox="0 0 15 13"><path d="M7.5 0 L15 13 H0 Z" fill="#8f8465"/><rect x="6.7" y="4" width="1.6" height="5" fill="#2b2b2b"/><rect x="6.7" y="10" width="1.6" height="1.6" fill="#2b2b2b"/></svg>
<div class="t " style="left:1160px;top:113.78px;font-size:16.5px;line-height:21px;color:#bbbbbb;">9</div>
<svg style="left:1179px;top:116px;" width="16" height="16" viewBox="0 0 16 16"><path d="M1 6 L5 10 L13 1" fill="none" stroke="#499c54" stroke-width="2.6"/><path d="M0 15 L2.5 12.5 L5 15 L7.5 12.5 L10 15 L12.5 12.5 L14 14" fill="none" stroke="#499c54" stroke-width="1"/></svg>
<div class="t " style="left:1198px;top:113.78px;font-size:16.5px;line-height:21px;color:#bbbbbb;">3</div>
<svg style="left:1219px;top:119px;" width="11" height="7" viewBox="0 0 11 7"><path d="M0.5 6.5 L5.5 1 L10.5 6.5" fill="none" stroke="#afb1b3" stroke-width="1.4"/></svg>
<svg style="left:1245px;top:120px;" width="11" height="7" viewBox="0 0 11 7"><path d="M0.5 0.5 L5.5 6 L10.5 0.5" fill="none" stroke="#afb1b3" stroke-width="1.4"/></svg>
<div class="a" style="left:1267px;top:72px;width:1px;height:895px;background:#2b2b2b;"></div>
<div class="a" style="left:1268px;top:72px;width:626px;height:895px;background:#3c3f41;"></div>
<div class="a" style="left:1268px;top:72px;width:626px;height:33px;background:#3b4754;"></div>
<div class="a" style="left:1268px;top:105px;width:626px;height:1px;background:#323232;"></div>
<div class="t " style="left:1275px;top:79.80px;font-size:15px;line-height:20px;color:#bbbbbb;">通义灵码</div>
<div class="a" style="left:1642px;top:72px;width:1px;height:33px;background:#34404c;"></div>
<svg style="left:1697px;top:79px;" width="20" height="20" viewBox="0 0 20 20"><path d="M3.2 6.5 A8 8 0 1 1 2.2 11" fill="none" stroke="#afb1b3" stroke-width="1.7"/><path d="M0.5 3.5 L3.5 7.5 L7.5 5.5" fill="none" stroke="#afb1b3" stroke-width="1.7"/><path d="M10 5.5 V10.5 L13.5 12.5" fill="none" stroke="#afb1b3" stroke-width="1.7"/></svg>
<svg style="left:1729px;top:79px;" width="20" height="20" viewBox="0 0 20 20"><path d="M9 2 H2 V18 H17 V10" fill="none" stroke="#afb1b3" stroke-width="1.8"/><path d="M7 13 L8 9.5 L16.5 1 L19 3.5 L10.5 12 Z" fill="none" stroke="#afb1b3" stroke-width="1.7"/></svg>
<svg style="left:1761px;top:78px;" width="21" height="21" viewBox="0 0 21 21"><circle cx="10.5" cy="10.5" r="9.3" fill="none" stroke="#afb1b3" stroke-width="1.7"/><path d="M7.3 8 Q7.3 4.8 10.5 4.8 Q13.7 4.8 13.7 7.8 Q13.7 9.6 11.6 10.6 Q10.5 11.2 10.5 13" fill="none" stroke="#afb1b3" stroke-width="1.8"/><rect x="9.5" y="14.6" width="2" height="2" fill="#afb1b3"/></svg>
<svg style="left:1793px;top:78px;" width="21" height="21" viewBox="0 0 21 21"><path transform="translate(7.3 7.1) rotate(45)" d="M-6.12 -2.2 L-1.6 -2.2 L-1.6 2.2 L-6.12 2.2 A6.5 6.5 0 0 0 5.95 2.6 L15.4 2.6 A2.6 2.6 0 0 0 15.4 -2.6 L5.95 -2.6 A6.5 6.5 0 0 0 -6.12 -2.2Z" fill="none" stroke="#afb1b3" stroke-width="1.7" stroke-linejoin="round"/></svg>
<div class="a" style="left:1824px;top:78px;width:1px;height:22px;background:#4e5a66;"></div>
<svg style="left:1837px;top:81px;" width="17" height="17" viewBox="0 0 17 17"><g transform="translate(8 8)"><circle r="6.2" fill="#afb1b3"/><rect x="-2.2" y="-8" width="4.4" height="16" rx="1" fill="#afb1b3" transform="rotate(0)"/><rect x="-2.2" y="-8" width="4.4" height="16" rx="1" fill="#afb1b3" transform="rotate(60)"/><rect x="-2.2" y="-8" width="4.4" height="16" rx="1" fill="#afb1b3" transform="rotate(120)"/><circle r="2.6" fill="#3b4754"/></g></svg>
<div class="a" style="left:1870px;top:88px;width:16px;height:2px;background:#afb1b3;"></div>
<div class="a" style="left:1268px;top:106px;width:626px;height:50px;background:#3c3f41;"></div>
<div class="t " style="left:1283px;top:123.87px;font-size:14.8px;line-height:19px;color:#bbbbbb;">智能问答</div>
<div class="t " style="left:1383px;top:123.30px;font-size:15px;line-height:20px;color:#bbbbbb;">AI 程序员</div>
<div class="a" style="left:1383px;top:154px;width:63px;height:2px;background:#4a88c7;"></div>
<div class="a" style="left:1268px;top:156px;width:626px;height:1px;background:#323232;"></div>
<svg style="left:1676px;top:121px;" width="21" height="21" viewBox="0 0 21 21"><circle cx="10.5" cy="10.5" r="9.3" fill="none" stroke="#afb1b3" stroke-width="1.7"/><path d="M10.5 5 V16 M5 10.5 H16" stroke="#afb1b3" stroke-width="1.8"/></svg>
<div class="a" style="left:1718px;top:121px;width:1px;height:22px;background:#2f3133;"></div>
<svg style="left:1747px;top:121px;" width="19" height="22" viewBox="0 0 19 22"><circle cx="9.5" cy="6" r="5" fill="none" stroke="#afb1b3" stroke-width="1.7"/><path d="M1 21.5 V19 Q1 13 9.5 13 Q18 13 18 19 V21.5" fill="none" stroke="#afb1b3" stroke-width="1.7"/></svg>
<div class="t " style="left:1774px;top:123.30px;font-size:15px;line-height:20px;color:#bbbbbb;">北京宏哥</div>
<svg style="left:1850px;top:128px;" width="13" height="8" viewBox="0 0 13 8"><path d="M0 0 H13 L6.5 7Z" fill="#afb1b3"/></svg>
<div class="a" style="left:1268px;top:157px;width:614px;height:661px;overflow:hidden">
<div class="a" style="left:14px;top:-37px;width:578px;height:72px;background:#333537;border-radius:0 0 9px 9px"></div>
<div class="t " style="left:30px;top:-3.89px;font-size:17px;line-height:22px;color:#bbbbbb;">sound.wav<span style="font-size:16px">（子弹声音）、</span>background_music.mp3(<span style="font-size:16px">背景音乐</span>),</div>
<div class="a" style="left:14px;top:45px;width:578px;height:700px;background:#333537;border-radius:9px"></div>
<svg style="left:30px;top:58px;" width="25" height="25" viewBox="0 0 25 25"><defs><linearGradient id="tyg" x1="0" y1="0" x2="1" y2="1"><stop offset="0" stop-color="#7d72ff"/><stop offset="1" stop-color="#5a32e8"/></linearGradient></defs><path d="M9.4 0.9 L14.6 4.6 L21.0 4.0 L20.4 10.4 L24.1 15.6 L18.3 18.3 L15.6 24.1 L10.4 20.4 L4.0 21.0 L4.6 14.6 L0.9 9.4 L6.7 6.7Z" fill="url(#tyg)" stroke="url(#tyg)" stroke-width="2.2" stroke-linejoin="round"/><path d="M9.5 2.8 L6.6 8 H22.2" fill="none" stroke="#fff" stroke-width="2.4"/><path d="M3.8 7.8 L11.6 20.4 H5" fill="none" stroke="#fff" stroke-width="2.4"/><path d="M12.2 23 L19.6 10.6 L23.6 15.6" fill="none" stroke="#fff" stroke-width="2.4"/></svg>
<div class="t " style="left:61px;top:61.80px;font-size:15px;line-height:20px;color:#bbbbbb;">通义灵码</div>
<div class="t " style="left:133px;top:61.80px;font-size:15px;line-height:20px;color:#8c8c8c;">@AI 程序员</div>
<svg style="left:467px;top:58px;" width="18" height="21" viewBox="0 0 18 21"><path d="M4.8 1.2 H11 L16.8 7 V16.2 H4.8 Z" fill="none" stroke="#afb1b3" stroke-width="1.7" stroke-linejoin="round"/><path d="M11 1.2 V7 H16.8" fill="none" stroke="#afb1b3" stroke-width="1.7" stroke-linejoin="round"/><path d="M1.2 5 V19.6 H13" fill="none" stroke="#afb1b3" stroke-width="1.7"/></svg>
<svg style="left:511px;top:59px;" width="19" height="20" viewBox="0 0 19 20"><path d="M1 9 H5 V19 H1 Z" fill="none" stroke="#afb1b3" stroke-width="1.7"/><path d="M5 9 L9 1.5 Q11.5 1.5 11.5 4 V7.5 H17 Q18.5 7.5 18.2 9.5 L16.5 17.5 Q16 19 14.5 19 H5" fill="none" stroke="#afb1b3" stroke-width="1.7" stroke-linejoin="round"/></svg>
<svg style="left:555px;top:59px;" width="19" height="20" viewBox="0 0 19 20"><path d="M1 1 H5 V11 H1 Z" fill="none" stroke="#afb1b3" stroke-width="1.7"/><path d="M5 11 L9 18.5 Q11.5 18.5 11.5 16 V12.5 H17 Q18.5 12.5 18.2 10.5 L16.5 2.5 Q16 1 14.5 1 H5" fill="none" stroke="#afb1b3" stroke-width="1.7" stroke-linejoin="round"/></svg>
<div class="t " style="left:30px;top:116.96px;font-size:16px;line-height:21px;color:#bbbbbb;">为了实现一个完整的飞机大战游戏，我们需要创建多个类来处理游戏的不同部</div>
<div class="t " style="left:30px;top:145.96px;font-size:16px;line-height:21px;color:#bbbbbb;">分，包括玩家飞机、敌机、子弹、碰撞检测等。以下是完整的代码实现，包括</div>
<div class="t " style="left:30px;top:174.96px;font-size:16px;line-height:21px;color:#bbbbbb;">必要的导入、初始化、游戏循环和事件处理等。</div>
<div class="t " style="left:30px;top:229.26px;font-size:18px;line-height:23px;color:#bbbbbb;font-weight:bold;">文件结构</div>
<div class="a" style="left:14px;top:273px;width:579px;height:298px;background:#2b2b2b;"></div>
<svg style="left:465px;top:283px;" width="22" height="18" viewBox="0 0 22 18"><rect x="1" y="1" width="12" height="6" rx="1.3" fill="none" stroke="#3592c4" stroke-width="1.6"/><rect x="1" y="10.6" width="12" height="6" rx="1.3" fill="none" stroke="#3592c4" stroke-width="1.6"/><path d="M19.6 5.4 L16.4 8.8 L19.6 12.2" fill="none" stroke="#3592c4" stroke-width="1.6"/></svg>
<svg style="left:512px;top:282px;" width="18" height="21" viewBox="0 0 18 21"><path d="M4.8 1.2 H11 L16.8 7 V16.2 H4.8 Z" fill="none" stroke="#3592c4" stroke-width="1.7" stroke-linejoin="round"/><path d="M11 1.2 V7 H16.8" fill="none" stroke="#3592c4" stroke-width="1.7" stroke-linejoin="round"/><path d="M1.2 5 V19.6 H13" fill="none" stroke="#3592c4" stroke-width="1.7"/></svg>
<svg style="left:556px;top:282px;" width="19" height="19" viewBox="0 0 19 19"><rect x="1.5" y="1.5" width="16.5" height="16.5" rx="1.2" fill="none" stroke="#3592c4" stroke-width="1.6"/><path d="M9.75 5.5 V14 M5.5 9.75 H14" stroke="#3592c4" stroke-width="1.6"/></svg>
<div class="a" style="left:30px;top:312px;width:548px;height:2px;background:#3a3d3f;"></div>
<div class="t" style="white-space:pre;left:30.59999999999991px;top:331.62px;font-family:'Liberation Mono',monospace;font-size:18.33px;line-height:25px;color:#a9b7c6">D<span style="color:#cc7832">:</span>\Demo\plane_war_game\</div>
<div class="t" style="white-space:pre;left:30.59999999999991px;top:356.62px;font-family:'Liberation Mono',monospace;font-size:18.33px;line-height:25px;color:#a9b7c6">        main<span style="color:#cc7832">.</span>py</div>
<div class="t" style="white-space:pre;left:30.59999999999991px;top:381.62px;font-family:'Liberation Mono',monospace;font-size:18.33px;line-height:25px;color:#a9b7c6">        assets\</div>
<div class="t" style="white-space:pre;left:30.59999999999991px;top:406.62px;font-family:'Liberation Mono',monospace;font-size:18.33px;line-height:25px;color:#a9b7c6">            bullet<span style="color:#cc7832">.</span>svg</div>
<div class="t" style="white-space:pre;left:30.59999999999991px;top:431.62px;font-family:'Liberation Mono',monospace;font-size:18.33px;line-height:25px;color:#a9b7c6">            enemy<span style="color:#cc7832">.</span>svg</div>
<div class="t" style="white-space:pre;left:30.59999999999991px;top:456.62px;font-family:'Liberation Mono',monospace;font-size:18.33px;line-height:25px;color:#a9b7c6">            explosion<span style="color:#cc7832">.</span>svg</div>
<div class="t" style="white-space:pre;left:30.59999999999991px;top:481.62px;font-family:'Liberation Mono',monospace;font-size:18.33px;line-height:25px;color:#a9b7c6">            player<span style="color:#cc7832">.</span>svg</div>
<div class="t" style="white-space:pre;left:30.59999999999991px;top:506.62px;font-family:'Liberation Mono',monospace;font-size:18.33px;line-height:25px;color:#a9b7c6">            sound<span style="color:#cc7832">.</span>wav</div>
<div class="t" style="white-space:pre;left:30.59999999999991px;top:531.62px;font-family:'Liberation Mono',monospace;font-size:18.33px;line-height:25px;color:#a9b7c6">            background_music<span style="color:#cc7832">.</span>mp3</div>
<div class="a" style="left:79.20000000000005px;top:353px;width:1.6px;height:52px;background:#a9b7c6;"></div>
<div class="a" style="left:79.20000000000005px;top:366.4px;width:29px;height:1.6px;background:#a9b7c6;"></div>
<div class="a" style="left:79.20000000000005px;top:391.4px;width:29px;height:1.6px;background:#a9b7c6;"></div>
<div class="a" style="left:123.20000000000005px;top:403.5px;width:1.6px;height:140px;background:#a9b7c6;"></div>
<div class="a" style="left:123.20000000000005px;top:416.4px;width:29px;height:1.6px;background:#a9b7c6;"></div>
<div class="a" style="left:123.20000000000005px;top:441.4px;width:29px;height:1.6px;background:#a9b7c6;"></div>
<div class="a" style="left:123.20000000000005px;top:466.4px;width:29px;height:1.6px;background:#a9b7c6;"></div>
<div class="a" style="left:123.20000000000005px;top:491.4px;width:29px;height:1.6px;background:#a9b7c6;"></div>
<div class="a" style="left:123.20000000000005px;top:516.4px;width:29px;height:1.6px;background:#a9b7c6;"></div>
<div class="a" style="left:123.20000000000005px;top:541.4px;width:29px;height:1.6px;background:#a9b7c6;"></div>
<div class="a" style="left:14px;top:577px;width:597px;height:84px;background:#2b2b2b;border-radius:9px 9px 0 0"></div>
<div class="a" style="left:14px;top:617px;width:597px;height:1px;background:#3c3f41;"></div>
<svg style="left:35px;top:592px;" width="11" height="7" viewBox="0 0 11 7"><path d="M0.6 0.6 L5.5 5.5 L10.4 0.6" fill="none" stroke="#afb1b3" stroke-width="1.5"/></svg>
<div class="t " style="left:55px;top:586.11px;font-size:17px;line-height:22px;color:#bbbbbb;">工作区</div>
<div class="t " style="left:117px;top:587.48px;font-size:14.5px;line-height:19px;color:#a0a0a0;">最新</div>
<svg style="left:157px;top:592px;" width="11" height="7" viewBox="0 0 11 7"><path d="M0.6 0.6 L5.5 5.5 L10.4 0.6" fill="none" stroke="#afb1b3" stroke-width="1.5"/></svg>
<svg style="left:528px;top:588px;" width="16" height="16" viewBox="0 0 16 16"><circle cx="8" cy="8" r="7" fill="none" stroke="#499c54" stroke-width="1.5"/><path d="M4.5 8 L7 10.5 L11.5 5.5" fill="none" stroke="#499c54" stroke-width="1.5"/></svg>
<div class="t " style="left:552px;top:586.48px;font-size:14.5px;line-height:19px;color:#a0a0a0;">已接受</div>
<svg style="left:528px;top:629px;" width="16" height="16" viewBox="0 0 16 16"><circle cx="8" cy="8" r="7" fill="none" stroke="#499c54" stroke-width="1.5"/><path d="M4.5 8 L7 10.5 L11.5 5.5" fill="none" stroke="#499c54" stroke-width="1.5"/></svg>
<div class="t " style="left:552px;top:627.48px;font-size:14.5px;line-height:19px;color:#a0a0a0;">已接受</div>
<svg style="left:34px;top:628px;" width="18" height="20" viewBox="0 0 18 20"><use href="#pyfile"/></svg>
<div class="t " style="left:60px;top:628.11px;font-size:17px;line-height:22px;color:#bbbbbb;">main.py</div>
</div>
<div class="a" style="left:1882px;top:222px;width:10px;height:233px;background:#4e5052;"></div>
<div class="a" style="left:1268px;top:818px;width:626px;height:1px;background:#2f3133;"></div>
<div class="a" style="left:1282px;top:831px;width:597px;height:123px;background:#2b2b2b;border-radius:10px"></div>
<div class="a" style="left:1297px;top:844px;width:25px;height:25px;background:#3c3f41;border-radius:3px"></div>
<svg style="left:1302px;top:849px;" width="15" height="15" viewBox="0 0 15 15"><path d="M7.5 1 V14 M1 7.5 H14" stroke="#9a9c9e" stroke-width="1.6"/></svg>
<div class="a" style="left:1328px;top:843px;width:119px;height:26px;background:#3c3f41;border-radius:3px"></div>
<svg style="left:1336px;top:846px;" width="18" height="20" viewBox="0 0 18 20"><use href="#pyfile"/></svg>
<div class="t " style="left:1363px;top:845.96px;font-size:16px;line-height:21px;color:#bbbbbb;">main.py</div>
<svg style="left:1428px;top:851px;" width="9" height="9" viewBox="0 0 9 9"><path d="M0.5 0.5 L8.5 8.5 M8.5 0.5 L0.5 8.5" stroke="#7b7e80" stroke-width="1.2"/></svg>
<div class="t " style="left:1306px;top:891.11px;font-size:17px;line-height:22px;color:#787878;">详细描述你的任务或者问题</div>
<div class="t " style="left:1300px;top:922.96px;font-size:16px;line-height:21px;color:#bbbbbb;">qwen-2.5</div>
<svg style="left:1375px;top:928px;" width="11" height="7" viewBox="0 0 11 7"><path d="M0.6 0.6 L5.5 5.5 L10.4 0.6" fill="none" stroke="#afb1b3" stroke-width="1.5"/></svg>
<div class="t " style="left:1641px;top:922.63px;font-size:15.5px;line-height:20px;color:#8c8c8c;">Ctrl+Enter 换行/Enter 发送</div>
<svg style="left:1843px;top:924px;" width="18" height="14" viewBox="0 0 18 14"><path d="M0 7 H16.5 M10.5 1 L16.8 7 L10.5 13" fill="none" stroke="#bbbbbb" stroke-width="1.8"/></svg>
<div class="a" style="left:1894px;top:72px;width:1px;height:895px;background:#2d2f31;"></div>
<div class="a" style="left:1895px;top:72px;width:25px;height:895px;background:#3c3f41;"></div>
<svg style="left:1901px;top:85px;" width="15" height="16" viewBox="0 0 15 16"><g fill="#afb1b3"><ellipse cx="7.2" cy="2.2" rx="7" ry="2"/><path d="M0.2 4.3 Q7.2 7.8 14.2 4.3 V6.3 Q7.2 9.8 0.2 6.3Z"/><path d="M0.2 8 Q7.2 11.5 14.2 8 V10 Q7.2 13.5 0.2 10Z"/><path d="M0.2 11.7 Q7.2 15.2 14.2 11.7 V13.5 Q7.2 17 0.2 13.5Z"/></g></svg>
<div class="t " style="left:0px;top:-13.11px;font-size:13.3px;line-height:17px;color:#bbbbbb;transform-origin:0 0;transform:translate(1913.5px,105.5px) rotate(90deg);top:0;line-height:18px">Database</div>
<svg style="left:1900px;top:191px;" width="13" height="13" viewBox="0 0 13 13"><g fill="#afb1b3"><rect x="0" y="0" width="13" height="3"/><rect x="0" y="5" width="3" height="3"/><rect x="5" y="5" width="3" height="3"/><rect x="10" y="5" width="3" height="3"/><rect x="0" y="10" width="3" height="3"/><rect x="5" y="10" width="3" height="3"/><rect x="10" y="10" width="3" height="3"/></g></svg>
<div class="t " style="left:0px;top:-13.11px;font-size:13.3px;line-height:17px;color:#bbbbbb;transform-origin:0 0;transform:translate(1913.5px,210.5px) rotate(90deg);top:0;line-height:18px">SciView</div>
<div class="a" style="left:1895px;top:269px;width:25px;height:98px;background:#2d2f31;"></div>
<svg style="left:1899px;top:283px;" width="16" height="16" viewBox="0 0 16 16"><path d="M6.0 0.5 L9.4 2.8 L13.5 2.5 L13.2 6.6 L15.5 10.0 L11.8 11.8 L10.0 15.5 L6.6 13.2 L2.5 13.5 L2.8 9.4 L0.5 6.0 L4.2 4.2Z" fill="#c8c8c8" stroke="#c8c8c8" stroke-width="1.2" stroke-linejoin="round"/><path d="M6 1.8 L4.2 5.2 H14.2 M2.4 5 L7.4 13 H3.2 M7.8 14.8 L12.5 6.8 L15 10" fill="none" stroke="#2d2f31" stroke-width="1.5"/></svg>
<div class="t " style="left:0px;top:-14.52px;font-size:14.5px;line-height:19px;color:#dddddd;transform-origin:0 0;transform:translate(1913.5px,300px) rotate(90deg);top:0;line-height:18px">通义灵码</div>
<div class="a" style="left:0px;top:966px;width:1920px;height:1px;background:#323232;"></div>
<div class="a" style="left:0px;top:967px;width:1920px;height:27px;background:#3c3f41;"></div>
<svg style="left:43px;top:975px;" width="12" height="16" viewBox="0 0 12 16"><circle cx="2.5" cy="2" r="1.9" fill="#afb1b3"/><circle cx="2.5" cy="14" r="1.9" fill="#afb1b3"/><circle cx="9.5" cy="3.5" r="1.9" fill="#afb1b3"/><path d="M2.5 2 V14 M2.5 10.5 Q9.5 9.5 9.5 3.5" fill="none" stroke="#afb1b3" stroke-width="1.8"/></svg>
<div class="t " style="left:63px;top:974.72px;font-size:13.8px;line-height:18px;color:#bbbbbb;">Version Control</div>
<svg style="left:188px;top:976px;" width="11" height="12" viewBox="0 0 11 12"><path d="M0 0 L11 6 L0 12Z" fill="#afb1b3"/></svg>
<div class="t " style="left:206px;top:974.72px;font-size:13.8px;line-height:18px;color:#bbbbbb;">Run</div>
<svg style="left:256px;top:976px;" width="13" height="12" viewBox="0 0 13 12"><g fill="#afb1b3"><rect x="0" y="0" width="2.4" height="2.4"/><rect x="4" y="0" width="9" height="2.4"/><rect x="0" y="4.8" width="2.4" height="2.4"/><rect x="4" y="4.8" width="9" height="2.4"/><rect x="0" y="9.6" width="2.4" height="2.4"/><rect x="4" y="9.6" width="9" height="2.4"/></g></svg>
<div class="t " style="left:275px;top:974.72px;font-size:13.8px;line-height:18px;color:#bbbbbb;">TODO</div>
<svg style="left:340px;top:974px;" width="14" height="14" viewBox="0 0 14 14"><circle cx="7" cy="7" r="7" fill="#afb1b3"/><rect x="6" y="3" width="2" height="5.5" fill="#3c3f41"/><rect x="6" y="9.7" width="2" height="2" fill="#3c3f41"/></svg>
<div class="t " style="left:360px;top:974.72px;font-size:13.8px;line-height:18px;color:#bbbbbb;">Problems</div>
<svg style="left:445px;top:974px;" width="15" height="14" viewBox="0 0 15 14"><rect x="0" y="0" width="15" height="14" fill="#afb1b3"/><path d="M3 3.5 L6.5 6.5 L3 9.5" fill="none" stroke="#3c3f41" stroke-width="1.5"/><rect x="7" y="10" width="5" height="1.5" fill="#3c3f41"/></svg>
<div class="t " style="left:465px;top:974.72px;font-size:13.8px;line-height:18px;color:#bbbbbb;">Terminal</div>
<svg style="left:546px;top:973px;" width="16" height="17" viewBox="0 0 16 17"><path d="M8 0.5 L15.5 4 L8 7.5 L0.5 4Z" fill="#afb1b3"/><path d="M0.5 7.5 L8 11 L15.5 7.5 M0.5 11 L8 14.5 L15.5 11" fill="none" stroke="#afb1b3" stroke-width="1.6"/></svg>
<div class="t " style="left:566px;top:974.72px;font-size:13.8px;line-height:18px;color:#bbbbbb;">Python Packages</div>
<svg style="left:704px;top:974px;" width="15" height="15" viewBox="0 0 15 15"><path d="M7.2 0.3c-3.8 0-3.5 1.6-3.5 1.6v1.7h3.6v.5H2.3S0 3.9 0 7.6s2 3.6 2 3.6h1.2V9.4s-.1-2 2-2h3.5s2 0 2-2V2.3S10.9.3 7.2.3z" fill="#afb1b3"/><path d="M7.8 14.7c3.8 0 3.5-1.6 3.5-1.6v-1.7H7.7v-.5h5S15 11.1 15 7.4s-2-3.6-2-3.6h-1.2v1.8s.1 2-2 2H6.3s-2 0-2 2v2.7S4.1 14.7 7.8 14.7z" fill="#afb1b3"/></svg>
<div class="t " style="left:724px;top:974.72px;font-size:13.8px;line-height:18px;color:#bbbbbb;">Python Console</div>
<div class="a" style="left:1799px;top:974px;width:16px;height:16px;background:#499c54;border-radius:8px 8px 0 8px"></div>
<svg style="left:1799px;top:974px;" width="16" height="16" viewBox="0 0 16 16"><text x="4.6" y="12.2" font-size="11.5" font-weight="bold" fill="#fff" font-family="Liberation Sans">4</text></svg>
<div class="t " style="left:1820px;top:974.72px;font-size:13.8px;line-height:18px;color:#bbbbbb;">Event Log</div>
<div class="a" style="left:0px;top:994px;width:1920px;height:1px;background:#4a4c4e;"></div>
<div class="a" style="left:0px;top:995px;width:1920px;height:25px;background:#3c3f41;"></div>
<svg style="left:8px;top:1000px;" width="15" height="15" viewBox="0 0 15 15"><rect x="3.5" y="0.5" width="11" height="11" fill="none" stroke="#afb1b3" stroke-width="1.3"/><path d="M0.5 3 V14.5 H12" fill="none" stroke="#afb1b3" stroke-width="1.3"/></svg>
<div class="t " style="left:34px;top:996.96px;font-size:16px;line-height:21px;color:#bbbbbb;"><span style="font-size:14.5px">通义灵码</span>: <span style="font-size:14.5px">登录成功。</span> (18 minutes ago)</div>
<div class="t " style="left:1535px;top:996.96px;font-size:16px;line-height:21px;color:#bbbbbb;">10:20</div>
<div class="t " style="left:1589px;top:996.96px;font-size:16px;line-height:21px;color:#bbbbbb;">LF</div>
<div class="t " style="left:1620px;top:996.96px;font-size:16px;line-height:21px;color:#bbbbbb;">UTF-8</div>
<div class="t " style="left:1678px;top:996.96px;font-size:16px;line-height:21px;color:#bbbbbb;">4 spaces</div>
<div class="t " style="left:1755px;top:996.96px;font-size:16px;line-height:21px;color:#bbbbbb;">Python 3.10</div>
<svg style="left:1855px;top:998px;" width="14" height="17" viewBox="0 0 14 17"><path d="M3 8 V4.5 Q3 1 6 1 Q9 1 9 4.5" fill="none" stroke="#afb1b3" stroke-width="1.8"/><rect x="4" y="8" width="10" height="8" fill="#afb1b3"/></svg>
<svg style="left:1885px;top:996px;" width="21" height="21" viewBox="0 0 21 21"><g transform="scale(.84)"><defs><linearGradient id="tyg2" x1="0" y1="0" x2="1" y2="1"><stop offset="0" stop-color="#7d72ff"/><stop offset="1" stop-color="#5a32e8"/></linearGradient></defs><path d="M9.4 0.9 L14.6 4.6 L21.0 4.0 L20.4 10.4 L24.1 15.6 L18.3 18.3 L15.6 24.1 L10.4 20.4 L4.0 21.0 L4.6 14.6 L0.9 9.4 L6.7 6.7Z" fill="url(#tyg2)" stroke="url(#tyg2)" stroke-width="2.2" stroke-linejoin="round"/><path d="M9.5 2.8 L6.6 8 H22.2" fill="none" stroke="#fff" stroke-width="2.4"/><path d="M3.8 7.8 L11.6 20.4 H5" fill="none" stroke="#fff" stroke-width="2.4"/><path d="M12.2 23 L19.6 10.6 L23.6 15.6" fill="none" stroke="#fff" stroke-width="2.4"/></g></svg>
</body></html>
